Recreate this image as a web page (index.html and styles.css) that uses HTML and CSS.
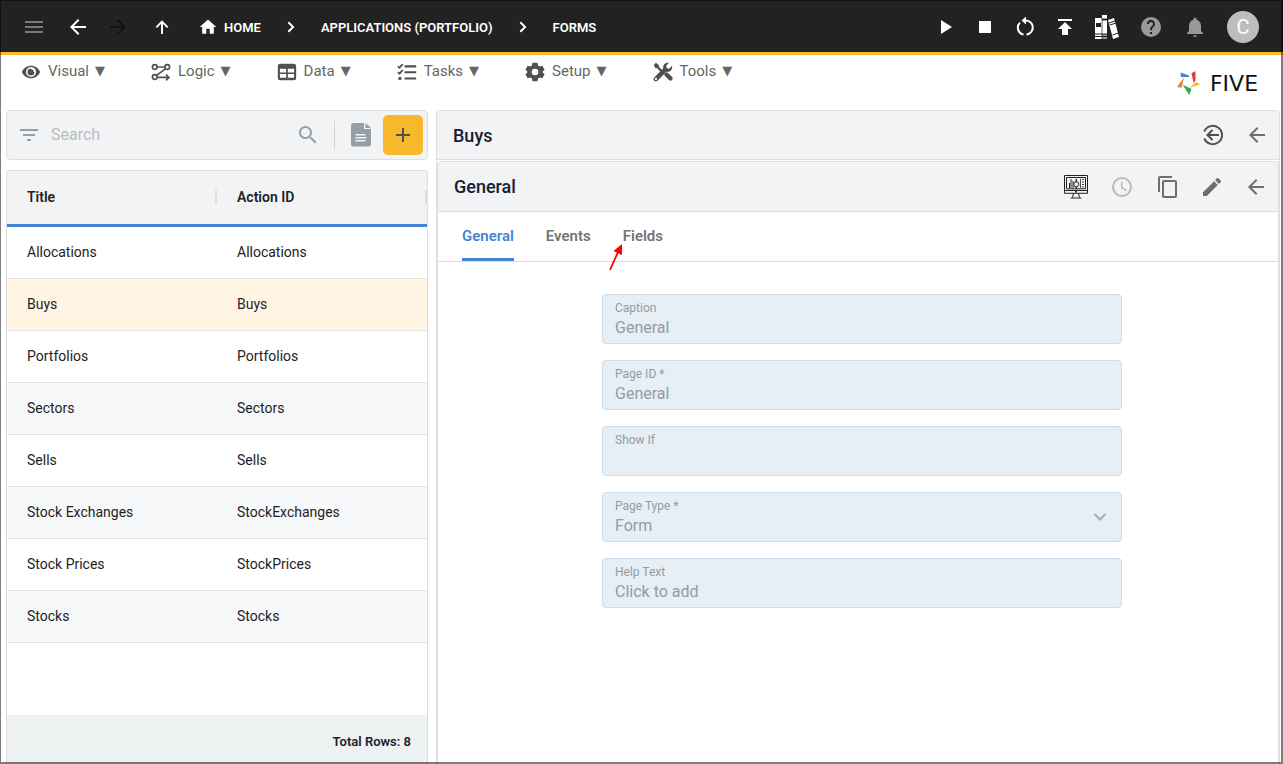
FILE: index.html
```html
<!DOCTYPE html>
<html lang="en">
<head>
<meta charset="utf-8">
<meta name="viewport" content="width=device-width, initial-scale=1">
<title>Five - Forms</title>
<link rel="stylesheet" href="styles.css">
</head>
<body>
<div class="app">
  <header class="topbar">
    <button class="icon-btn dim menu-toggle" aria-label="Menu"><svg viewBox="0 0 24 24"><path d="M3 6h18v2H3zM3 11h18v2H3zM3 16h18v2H3z"/></svg></button>
    <nav class="history" aria-label="History">
      <button class="icon-btn" aria-label="Back"><svg viewBox="0 0 24 24"><path d="M20 11H7.800l5.600-5.600L12 4l-8 8 8 8 1.400-1.400L7.800 13H20z"/></svg></button>
      <button class="icon-btn off" aria-label="Forward" disabled><svg viewBox="0 0 24 24"><path d="M12 4l-1.400 1.400 5.600 5.600H4v2h12.200l-5.600 5.600L12 20l8-8z"/></svg></button>
      <button class="icon-btn up" aria-label="Up"><svg viewBox="0 0 24 24"><path d="M6.300 12.300 12 6.600l5.700 5.700M12 6.500V19" fill="none" stroke="currentColor" stroke-width="1.900"/></svg></button>
    </nav>
    <nav class="crumbs" aria-label="Breadcrumb">
      <a class="crumb home" href="#"><svg viewBox="0 0 24 24"><path d="M10 20v-6h4v6h5v-8h3L12 3 2 12h3v8z"/></svg>HOME</a>
      <svg viewBox="0 0 24 24" aria-hidden="true"><path d="M10 6.500 8.600 7.900l4.100 4.100-4.100 4.100L10 17.500l5.500-5.500z"/></svg>
      <a class="crumb" href="#">APPLICATIONS (PORTFOLIO)</a>
      <svg viewBox="0 0 24 24" aria-hidden="true"><path d="M10 6.500 8.600 7.900l4.100 4.100-4.100 4.100L10 17.500l5.500-5.500z"/></svg>
      <a class="crumb" href="#">FORMS</a>
    </nav>
    <div class="actions">
      <button class="icon-btn" aria-label="Run"><svg viewBox="0 0 24 24"><path d="M8 5v14l11-7z"/></svg></button>
      <button class="icon-btn" aria-label="Stop"><svg viewBox="0 0 24 24"><path d="M6 6h12v12H6z"/></svg></button>
      <button class="icon-btn" aria-label="Restart"><svg viewBox="0 0 24 24"><g fill="none" stroke="currentColor" stroke-width="2"><path d="M12 5.500a7 7 0 0 1 1.500 14"/><path d="M10.500 19.500A7 7 0 0 1 7 7.600"/></g><path d="M8.500 5.500 13 1.500v8z"/></svg></button>
      <button class="icon-btn" aria-label="Deploy"><svg viewBox="0 0 24 24"><path d="M5 4v2h14V4zm0 10h4v6h6v-6h4l-7-7z"/></svg></button>
      <button class="icon-btn library" aria-label="Library"><svg viewBox="0 0 24 24"><path d="M0 3h7v21H0z"/><path fill="#999" d="M7 2h5v22H7z"/><path d="M7 0h5v3H7zM7 6h5v13H7zM13 5l6-2 5 19-6 2z"/><path d="M1 8h5v4H1z" fill="#222"/><path d="M0 19h12M0 21.500h12M7 4.500h5M14 8l6-2M15 10l6-2M17.500 20l6-2" stroke="#222" stroke-width="1"/><path d="M7 3v21M12.500 0v24" stroke="#222" stroke-width=".7"/></svg></button>
    </div>
    <div class="account">
      <button class="icon-btn muted" aria-label="Help"><svg viewBox="0 0 24 24"><path d="M12 2a10 10 0 1 0 0 20 10 10 0 0 0 0-20zm1 17h-2v-2h2zm2.100-7.700-.9.900c-.7.700-1.200 1.300-1.200 2.800h-2v-.5c0-1.100.5-2.100 1.200-2.800l1.200-1.300A2 2 0 1 0 10 9H8a4 4 0 1 1 7.100 2.300z"/></svg></button>
      <button class="icon-btn muted" aria-label="Notifications"><svg viewBox="0 0 24 24"><path d="M12 22a2 2 0 0 0 2-1.500h-4a2 2 0 0 0 2 1.500zm6-6v-5c0-3.100-1.600-5.600-4.500-6.300V4a1.500 1.500 0 0 0-3 0v.7C7.600 5.400 6 7.900 6 11v5l-2 2v1h16v-1z"/></svg></button>
      <button class="avatar" aria-label="Account">C</button>
    </div>
  </header>

  <div class="menubar">
    <nav class="menus" aria-label="Main">
      <button class="menu"><svg viewBox="0 0 24 24"><path fill-rule="evenodd" d="M12 4.500C7 4.500 2.700 7.600 1 12c1.700 4.400 6 7.500 11 7.500s9.300-3.100 11-7.500c-1.700-4.400-6-7.500-11-7.500zM12 18a6 6 0 1 1 0-12 6 6 0 0 1 0 12z"/><path d="M12 7.800a4.200 4.200 0 1 0 4.200 4.200L12 12z"/><circle cx="12" cy="12" r="3.300"/></svg>Visual<span class="caret">▼</span></button>
      <button class="menu"><svg viewBox="0 0 24 24"><g fill="none" stroke="currentColor" stroke-width="2"><circle cx="4.500" cy="6" r="2.800"/><circle cx="19.500" cy="6" r="2.800"/><circle cx="4.500" cy="18" r="2.800"/><path d="M7 6h9.500M17.500 8 6.800 16M7.500 18.500H21M18 15l3.500 3.500L18 22"/></g></svg>Logic<span class="caret">▼</span></button>
      <button class="menu"><svg viewBox="0 0 24 24"><path fill-rule="evenodd" d="M4 2h16a3 3 0 0 1 3 3v14a3 3 0 0 1-3 3H4a3 3 0 0 1-3-3V5a3 3 0 0 1 3-3zM3.500 8v4.500H11V8zM13 8v4.500h7.500V8zM3.500 14.500V19H11v-4.500zM13 14.500V19h7.500v-4.500z"/></svg>Data<span class="caret">▼</span></button>
      <button class="menu"><svg viewBox="0 0 24 24"><path d="M9 4h14v2.500H9zM9 11h14v2.500H9zM9 18.500h14V21H9z"/><circle cx="3.500" cy="19.700" r="2"/><path d="m1 5 2 2 4-4.500M1 12l2 2 4-4.500" fill="none" stroke="currentColor" stroke-width="2"/></svg>Tasks<span class="caret">▼</span></button>
      <button class="menu"><svg viewBox="0 0 24 24"><path fill-rule="evenodd" d="M9 1h6l.7 3.200 2 1.200 3.100-1 2.700 4.900-2.300 2.200v1.100l2.300 2.100-2.700 4.900-3.100-1-2 1.200L15 23H9l-.7-3.200-2-1.200-3.100 1-2.700-4.900 2.300-2.100v-1.100L.5 9.300l2.700-4.900 3.100 1 2-1.200zM12 8a4 4 0 1 0 0 8 4 4 0 0 0 0-8z"/></svg>Setup<span class="caret">▼</span></button>
      <button class="menu"><svg viewBox="0 0 24 24"><path d="M3.500 1 7 3.500v2.200l4.500 4.500-2 2L5 7.500H3L1 3.500zM14 13l3.500-.5 5.300 5.300a2.500 2.500 0 0 1-3.700 3.800L13.500 16z"/><path fill-rule="evenodd" d="M22.800 4.500 19.500 8l-3-.5-.6-3L19.200 1c-4.500-.9-7.800 2.500-6.900 6.600L1.500 18.500a2.800 2.800 0 0 0 4 4L16 11.700c4.500 1 8-2.400 6.800-7.200zM3.500 19a1.400 1.400 0 1 1 0 2.800 1.400 1.400 0 0 1 0-2.800z"/></svg>Tools<span class="caret">▼</span></button>
    </nav>
    <div class="brand">
      <svg viewBox="0 0 24 24" aria-hidden="true"><path fill="#4285d6" d="M3.500 1.500 12 4.500V6H4z"/><path fill="#e53935" d="m14.500 2 4-1.700v9L16.500 12z"/><path fill="#fbb829" d="M23.300 13.300 19 11l-6.500 6z"/><path fill="#34a853" d="m5.500 13.500 9 4.500-2.200 6z"/><path fill="#f47b30" d="M7 6.500 4.500 16.700 0 16z"/></svg>
      <span>FIVE</span>
    </div>
  </div>

  <main class="workspace">
    <section class="list">
      <div class="search">
        <svg class="slate" viewBox="0 0 24 24" aria-hidden="true"><path d="M10 18h4v-2h-4zM3 6v2h18V6zm3 7h12v-2H6z"/></svg>
        <input type="search" placeholder="Search" aria-label="Search">
        <button class="icon-btn slate" aria-label="Find"><svg viewBox="0 0 24 24"><path d="M15.500 14h-.8l-.3-.3a6.500 6.500 0 1 0-.7.700l.3.300v.8l5 5 1.500-1.500zm-6 0a4.500 4.500 0 1 1 0-9 4.500 4.500 0 0 1 0 9z"/></svg></button>
        <span class="divider"></span>
        <button class="icon-btn slate" aria-label="Report"><svg viewBox="0 0 24 24"><path fill-rule="evenodd" d="M5 0h10v6h7v15a2.500 2.500 0 0 1-2.500 2.500h-15A2.500 2.500 0 0 1 2 21V3a3 3 0 0 1 3-3zm1.500 11v1.500h10V11zm0 3v1.500h11V14zm0 3v1.500h10V17z"/><path d="M16.500 0 22 5h-5.500z"/></svg></button>
        <button class="add" aria-label="Add"><svg viewBox="0 0 24 24"><path d="M19 13h-6v6h-2v-6H5v-2h6V5h2v6h6z"/></svg></button>
      </div>
      <div class="grid">
        <table>
          <thead><tr><th scope="col"><span>Title</span></th><th scope="col"><span>Action ID</span></th></tr></thead>
          <tbody>
            <tr><td>Allocations</td><td>Allocations</td></tr>
            <tr class="selected"><td>Buys</td><td>Buys</td></tr>
            <tr><td>Portfolios</td><td>Portfolios</td></tr>
            <tr><td>Sectors</td><td>Sectors</td></tr>
            <tr><td>Sells</td><td>Sells</td></tr>
            <tr><td>Stock Exchanges</td><td>StockExchanges</td></tr>
            <tr><td>Stock Prices</td><td>StockPrices</td></tr>
            <tr><td>Stocks</td><td>Stocks</td></tr>
          </tbody>
        </table>
        <div class="total">Total Rows: 8</div>
      </div>
    </section>

    <section class="detail">
      <div class="bar">
        <h1>Buys</h1>
        <div class="tools">
          <button class="icon-btn strong" aria-label="Exit"><svg viewBox="0 0 24 24"><g fill="none" stroke="currentColor" stroke-width="2"><path d="M3.300 8.500a9.200 9.200 0 1 1 0 7"/><path d="M18 12H6.500M11.500 7l-5 5 5 5"/></g></svg></button>
          <button class="icon-btn" aria-label="Back"><svg viewBox="0 0 24 24"><path d="M20 11H7.800l5.600-5.600L12 4l-8 8 8 8 1.400-1.400L7.800 13H20z"/></svg></button>
        </div>
      </div>
      <div class="page">
        <div class="bar">
          <h2>General</h2>
          <div class="tools">
            <button class="icon-btn screen" aria-label="Preview"><svg viewBox="0 0 24 24"><g fill="none" stroke="currentColor"><path d="M.5.500h23v17.800H.5zM2.500 2.500h19v11.300h-19zM.5 15.500h23M9.500 18.500l-1 4M14.500 18.500l1 4M6.500 23h11"/><path d="M16.500 4v9M18 4.500h2M18 7h2M18 9.500h2M18 12h2" stroke-width=".8"/><path d="M7 4v9M9 6v7M5.500 8v5" stroke-width="1"/><circle cx="12.300" cy="9.300" r="2.500"/><path d="M12.300 4v3M12.300 12v2" stroke-width="1.400"/></g><circle cx="12" cy="16.800" r="1"/></svg></button>
            <button class="icon-btn faint" aria-label="History"><svg viewBox="0 0 24 24"><path d="M12 2a10 10 0 1 0 0 20 10 10 0 0 0 0-20zm0 18a8 8 0 1 1 0-16 8 8 0 0 1 0 16z"/><path d="M12.500 7H11v6l5.200 3.200.8-1.300-4.500-2.700z"/></svg></button>
            <button class="icon-btn" aria-label="Copy"><svg viewBox="0 0 24 24"><path d="M16 1H4a2 2 0 0 0-2 2v14h2V3h12zm3 4H8a2 2 0 0 0-2 2v14c0 1.100.9 2 2 2h11a2 2 0 0 0 2-2V7a2 2 0 0 0-2-2zm0 16H8V7h11z"/></svg></button>
            <button class="icon-btn" aria-label="Edit"><svg viewBox="0 0 24 24"><path d="M3 17.200V21h3.800L17.800 9.900l-3.700-3.700zM20.700 7a1 1 0 0 0 0-1.400l-2.300-2.300a1 1 0 0 0-1.400 0l-1.900 1.800 3.800 3.800z"/></svg></button>
            <button class="icon-btn" aria-label="Close"><svg viewBox="0 0 24 24"><path d="M20 11H7.800l5.600-5.600L12 4l-8 8 8 8 1.400-1.400L7.800 13H20z"/></svg></button>
          </div>
        </div>
        <div class="tabs" role="tablist">
          <button class="tab active" role="tab" aria-selected="true">General</button>
          <button class="tab" role="tab" aria-selected="false">Events</button>
          <button class="tab" role="tab" aria-selected="false">Fields<svg class="pointer" viewBox="0 0 16 28" aria-hidden="true"><path d="M2 27 10 9" stroke="#f00" stroke-width="1.800"/><path d="M14 1v11L5.500 8z" fill="#f00"/></svg></button>
        </div>
        <form class="form">
          <div class="field"><label for="caption">Caption</label><input id="caption" value="General" readonly></div>
          <div class="field"><label for="page-id">Page ID *</label><input id="page-id" value="General" readonly></div>
          <div class="field"><label for="show-if">Show If</label><input id="show-if" readonly></div>
          <div class="field"><label for="page-type">Page Type *</label><select id="page-type"><option>Form</option></select><svg viewBox="0 0 24 24" aria-hidden="true"><path d="m6.500 9 5.500 5.500L17.500 9" fill="none" stroke="currentColor" stroke-width="2"/></svg></div>
          <div class="field"><label for="help">Help Text</label><input id="help" value="Click to add" readonly></div>
        </form>
      </div>
    </section>
  </main>
</div>
</body>
</html>
```
FILE: styles.css
```css
* { box-sizing: border-box; }
body { margin: 0; background: #fff; color: #1f2124; font-family: Roboto, "Liberation Sans", sans-serif; font-size: 14px; }
button { padding: 0; border: 0; background: none; color: inherit; font: inherit; cursor: pointer; }
svg { display: block; width: 24px; height: 24px; flex: none; fill: currentColor; }

.app { position: relative; display: flex; flex-direction: column; height: 100vh; overflow: hidden; }
.app::after { content: ""; position: absolute; inset: 0; border: 1px solid rgba(0, 0, 0, .5); border-right-width: 2px; border-bottom-width: 2px; pointer-events: none; }

.topbar { display: flex; align-items: center; flex: none; height: 55px; padding: 0 24px 0 22px; background: #222; border-bottom: 3px solid #fbb829; color: #fff; }
.topbar > * { margin-top: 2px; }
.icon-btn { flex: none; }
.dim { color: #7a7a7a; }
.off { color: #121212; }
.muted { color: #999; }
.menu-toggle { margin-right: 20px; }
.history { display: flex; gap: 16px; margin-right: 22px; }
.up { margin-left: 4px; }
.crumbs { display: flex; align-items: center; gap: 18px; font-size: 13px; font-weight: 600; }
.crumb { display: flex; align-items: center; gap: 4px; color: #fff; text-decoration: none; }
.home svg { height: 20px; }
.actions { display: flex; gap: 16px; margin-left: auto; margin-right: 20px; }
.library { margin-left: 2px; }
.account { display: flex; align-items: center; gap: 20px; }
.avatar { width: 32px; height: 32px; border-radius: 50%; background: #bdbdbd; font-size: 20px; line-height: 32px; }

.menubar { display: flex; justify-content: space-between; flex: none; height: 55px; padding: 4px 20px; }
.menus { display: flex; align-items: flex-start; gap: 45px; }
.menu { display: flex; align-items: center; gap: 6px; height: 24px; color: #666; font-size: 15px; line-height: 20px; }
.menu svg { width: 22px; height: 20px; margin-top: 2px; color: #505050; }
.caret { font-family: "DejaVu Sans", sans-serif; font-size: 13px; }
.brand { display: flex; align-items: center; gap: 4px; height: 48px; color: #111; font-family: "DejaVu Sans", sans-serif; font-size: 22px; }
.brand span { min-width: 58px; text-align: center; }

.workspace { display: grid; grid-template-columns: minmax(0, 1fr) minmax(0, 2fr); gap: 8px; flex: 1; min-height: 0; padding: 0 3px 0 6px; }
.list { display: flex; flex-direction: column; gap: 10px; min-height: 0; }
.search { display: flex; align-items: center; flex: none; height: 50px; padding: 0 4px 0 10px; border: 1px solid #dedede; border-radius: 4px; background: #f1f3f5; }
.search input { flex: 1; min-width: 0; margin: 0 10px; padding: 0 0 2px; border: 0; outline: 0; background: none; font: 16px Roboto, sans-serif; }
.search input::placeholder { color: #b9bdc1; opacity: 1; }
.slate { color: #979fa6; }
.divider { width: 1px; height: 28px; margin: 0 14px; background: #d2d5d8; }
.add { display: flex; align-items: center; justify-content: center; width: 40px; height: 40px; margin-left: 10px; border-radius: 5px; background: #f7b92c; color: #505050; }

.grid { display: flex; flex-direction: column; flex: 1; min-height: 0; border: 1px solid #dedede; border-bottom: 0; border-radius: 4px 4px 0 0; overflow: hidden; }
table { width: 100%; table-layout: fixed; border-collapse: separate; border-spacing: 0; }
th, td { height: 52px; padding: 0 0 2px 20px; border-bottom: 1px solid #e1e3e5; text-align: left; }
th { height: 56px; background: #f1f3f5; border-bottom: 3px solid #4285d6; font-weight: 600; }
th span { display: block; line-height: 14px; border-right: 2px solid #dedede; }
tbody tr:nth-child(even) { background: #f7f8fa; }
tbody tr.selected { background: #fff5e2; }
.total { margin-top: auto; height: 49px; padding: 0 16px; background: #eef2f3; font-size: 13px; font-weight: 600; line-height: 54px; text-align: right; }

.detail { display: flex; flex-direction: column; gap: 1px; min-height: 0; border: 1px solid #dedede; border-bottom: 0; border-radius: 4px 4px 0 0; overflow: hidden; }
.bar { display: flex; align-items: center; justify-content: space-between; flex: none; height: 49px; padding: 0 10px 0 16px; border-bottom: 1px solid #dedede; background: #f1f3f5; }
h1, h2 { margin: 0; color: #172033; font-size: 18px; font-weight: 500; }
.tools { display: flex; gap: 20px; color: #6e6e6e; }
.tools .screen { margin-right: 2px; color: #222; }
.tools .faint { margin-right: 2px; color: #b7b9bb; }
.tools .strong { color: #505050; }
.page { flex: 1; border: 1px solid #dedede; border-bottom: 0; border-radius: 4px 4px 0 0; overflow: hidden; }
.page .bar { height: 50px; }
.tabs { display: flex; gap: 32px; height: 50px; padding: 0 24px; border-bottom: 1px solid #dedede; }
.tab { position: relative; height: 49px; padding-top: 2px; border-bottom: 3px solid transparent; color: #757575; font-size: 15px; font-weight: 600; }
.active { border-bottom-color: #4285d6; color: #4285d6; border-radius: 2px 2px 0 0; }
.pointer { position: absolute; left: -15px; top: 31px; width: 16px; height: 28px; overflow: visible; }
.form { display: flex; flex-direction: column; gap: 16px; max-width: 528px; margin: 32px auto; padding-left: 8px; }
.field { position: relative; display: flex; flex-direction: column; height: 50px; padding: 5px 12px; border: 1px solid #cbdded; border-radius: 4px; background: #e6eef6; color: #949ba3; }
.field label { font-size: 12px; line-height: 16px; }
.field input, .field select { width: 100%; height: 24px; padding: 0; border: 0; outline: 0; appearance: none; background: none; color: inherit; font: 16px/24px Roboto, sans-serif; }
.field svg { position: absolute; right: 9px; top: 12px; opacity: .8; }
```
